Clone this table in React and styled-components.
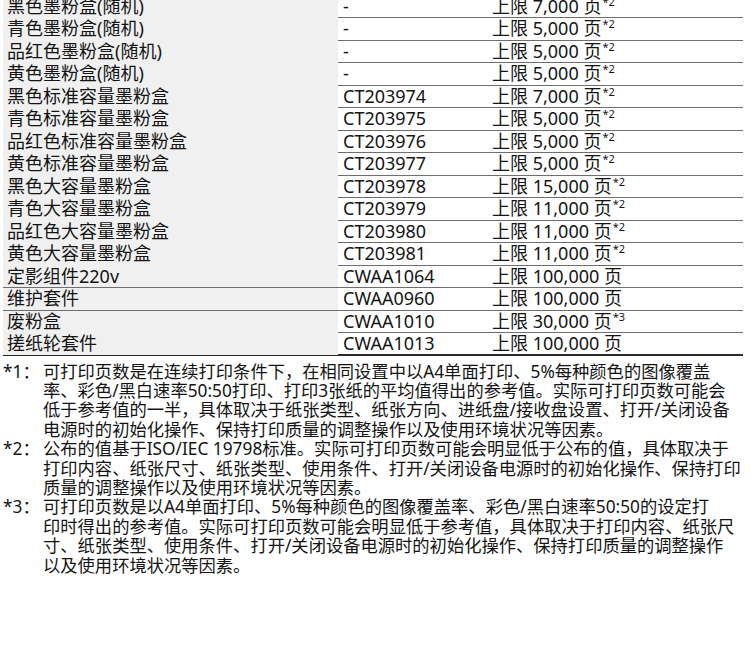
import React from 'react';
import styled, { createGlobalStyle } from 'styled-components';

const GlobalStyle = createGlobalStyle`
    html, body {
        margin: 0;
        padding: 0;
        background: #fff;
    }
    body {
        font-family: "Noto Sans", "Noto Sans CJK SC", sans-serif;
        color: #141414;
        overflow: hidden;
    }
`;

const Page = styled.div`
    width: 750px;
    height: 645px;
    margin-top: -4.5px;
`;

const Table = styled.div`
    width: 740px;
    margin-left: 3px;
`;

const Row = styled.div`
    display: grid;
    grid-template-columns: 335px 149px 1fr;
    height: 22.5px;
    box-sizing: border-box;
    border-bottom: ${p => (p.$last ? '2px solid #2a2a2a' : '1px solid #6e6e6e')};
    font-size: 18px;
    line-height: 21.5px;
`;

const NameCell = styled.div`
    background: #f0f0f0;
    padding-left: 4px;
    white-space: nowrap;
`;

const Cell = styled.div`
    padding-left: 5px;
    white-space: nowrap;
`;

const Sup = styled.span`
    font-size: 11px;
    position: relative;
    top: -7px;
    margin-left: 1px;
`;

const Notes = styled.div`
    margin-top: 6px;
    margin-left: 3px;
    display: flex;
    flex-direction: column;
`;

const Note = styled.div`
    display: grid;
    grid-template-columns: 40px 1fr;
    font-size: 17.3px;
    line-height: 19.4px;
`;

const NoteLabel = styled.div`
    white-space: nowrap;
`;

const NoteLine = styled.div`
    white-space: nowrap;
`;

const rows = [
    ['黑色墨粉盒(随机)', '-', '7,000', '2'],
    ['青色墨粉盒(随机)', '-', '5,000', '2'],
    ['品红色墨粉盒(随机)', '-', '5,000', '2'],
    ['黄色墨粉盒(随机)', '-', '5,000', '2'],
    ['黑色标准容量墨粉盒', 'CT203974', '7,000', '2'],
    ['青色标准容量墨粉盒', 'CT203975', '5,000', '2'],
    ['品红色标准容量墨粉盒', 'CT203976', '5,000', '2'],
    ['黄色标准容量墨粉盒', 'CT203977', '5,000', '2'],
    ['黑色大容量墨粉盒', 'CT203978', '15,000', '2'],
    ['青色大容量墨粉盒', 'CT203979', '11,000', '2'],
    ['品红色大容量墨粉盒', 'CT203980', '11,000', '2'],
    ['黄色大容量墨粉盒', 'CT203981', '11,000', '2'],
    ['定影组件220v', 'CWAA1064', '100,000', null],
    ['维护套件', 'CWAA0960', '100,000', null],
    ['废粉盒', 'CWAA1010', '30,000', '3'],
    ['搓纸轮套件', 'CWAA1013', '100,000', null],
];

const notes = [
    ['*1：', [
        '可打印页数是在连续打印条件下，在相同设置中以A4单面打印、5%每种颜色的图像覆盖',
        '率、彩色/黑白速率50:50打印、打印3张纸的平均值得出的参考值。实际可打印页数可能会',
        '低于参考值的一半，具体取决于纸张类型、纸张方向、进纸盘/接收盘设置、打开/关闭设备',
        '电源时的初始化操作、保持打印质量的调整操作以及使用环境状况等因素。',
    ]],
    ['*2：', [
        '公布的值基于ISO/IEC 19798标准。实际可打印页数可能会明显低于公布的值，具体取决于',
        '打印内容、纸张尺寸、纸张类型、使用条件、打开/关闭设备电源时的初始化操作、保持打印',
        '质量的调整操作以及使用环境状况等因素。',
    ]],
    ['*3：', [
        '可打印页数是以A4单面打印、5%每种颜色的图像覆盖率、彩色/黑白速率50:50的设定打',
        '印时得出的参考值。实际可打印页数可能会明显低于参考值，具体取决于打印内容、纸张尺',
        '寸、纸张类型、使用条件、打开/关闭设备电源时的初始化操作、保持打印质量的调整操作',
        '以及使用环境状况等因素。',
    ]],
];

const App = () => {
    return (
        <Page>
            <GlobalStyle />
            <Table>
                {rows.map(([name, code, pages, note], i) => (
                    <Row key={name} $last={i === rows.length - 1}>
                        <NameCell>{name}</NameCell>
                        <Cell>{code}</Cell>
                        <Cell>
                            上限 {pages} 页{note && <Sup>*{note}</Sup>}
                        </Cell>
                    </Row>
                ))}
            </Table>
            <Notes>
                {notes.map(([label, lines]) => (
                    <Note key={label}>
                        <NoteLabel>{label}</NoteLabel>
                        <div>
                            {lines.map(line => <NoteLine key={line}>{line}</NoteLine>)}
                        </div>
                    </Note>
                ))}
            </Notes>
        </Page>
    );
};

export default App;
